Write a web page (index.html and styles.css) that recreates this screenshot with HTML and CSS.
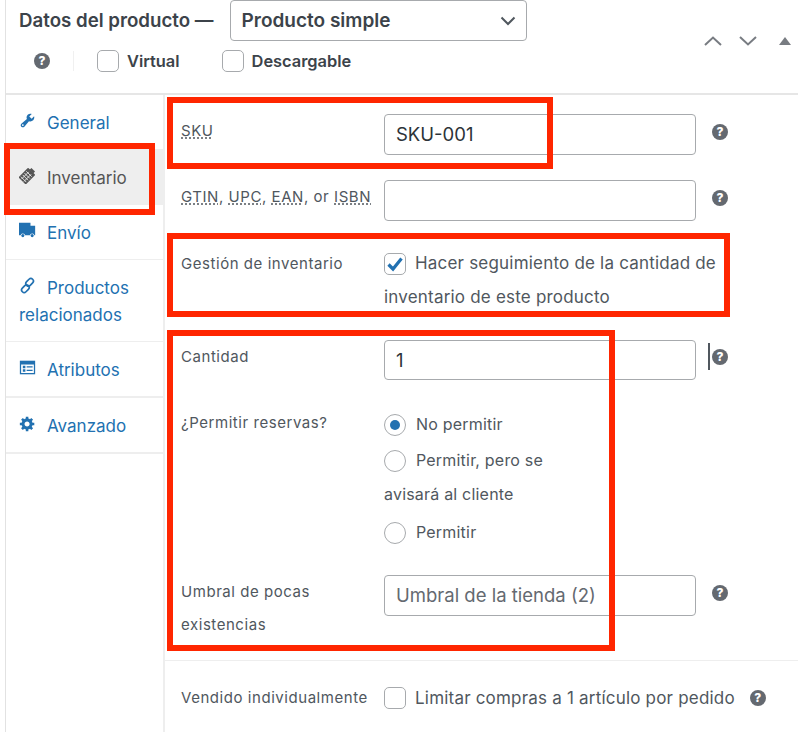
FILE: index.html
```html
<!DOCTYPE html>
<html lang="es">
<head>
    <meta charset="UTF-8">
    <meta name="viewport" content="width=device-width, initial-scale=1.0">
    <title>Datos del producto</title>
    <link rel="stylesheet" href="styles.css">
</head>
<body>
    <div class="postbox">
        <div class="postbox-header">
            <div class="header-main">
                <div class="title-line">
                    <h2>Datos del producto —</h2>
                    <div class="select-box">
                        <span>Producto simple</span>
                        <svg class="select-arrow" viewBox="0 0 16 10"><path d="M1.5 1.5 8 8l6.5-6.5"/></svg>
                    </div>
                </div>
                <div class="type-line">
                    <span class="help">?</span>
                    <span class="type-sep"></span>
                    <label class="type-option"><span class="check"></span>Virtual</label>
                    <label class="type-option"><span class="check"></span>Descargable</label>
                </div>
            </div>
            <div class="handle-actions">
                <svg class="handle" viewBox="0 0 18 10"><path d="M1 9l8-7.5L17 9"/></svg>
                <svg class="handle" viewBox="0 0 18 10"><path d="M1 1l8 7.5L17 1"/></svg>
                <svg class="handle-toggle" viewBox="0 0 12 8"><path d="M6 0l6 8H0z"/></svg>
            </div>
        </div>

        <div class="panel-wrap">
            <ul class="tabs">
                <li class="tab">
                    <a href="#">
                        <svg class="tab-icon" viewBox="0 0 20 20"><path d="M16.68 9.77c-1.34 1.34-3.3 1.67-4.95.99l-5.41 6.52c-.99.99-2.59.99-3.58 0s-.99-2.59 0-3.57l6.52-5.42c-.68-1.65-.35-3.61.99-4.95 1.28-1.28 3.12-1.62 4.72-1.06l-2.89 2.89 2.82 2.82 2.86-2.87c.53 1.58.18 3.39-1.08 4.67zM3.81 16.21c.4.39 1.04.39 1.43 0 .4-.4.4-1.04 0-1.43-.39-.4-1.03-.4-1.43 0-.39.39-.39 1.03 0 1.43z"/></svg>General
                    </a>
                </li>
                <li class="tab active">
                    <a href="#">
                        <svg class="tab-icon" viewBox="0 0 20 20"><g transform="rotate(45 10 10)"><rect x="4" y="3" width="12" height="16" rx="1"/><rect x="7" y="0.500" width="6" height="3"/><path class="hatch" d="M5.500 7.500h9M5.500 10.500h9M5.500 13.500h9M5.500 16.500h9M8 6v12M12 6v12"/></g></svg>Inventario
                    </a>
                </li>
                <li class="tab">
                    <a href="#">
                        <svg class="tab-icon" viewBox="0 0 20 20"><path d="M0 1h13.500v3.500H19v11H0z"/><circle class="hole" cx="4.500" cy="16" r="2.600"/><circle class="hole" cx="15.500" cy="16" r="2.600"/><circle cx="4.500" cy="16" r="1.800"/><circle cx="15.500" cy="16" r="1.800"/></svg>Envío
                    </a>
                </li>
                <li class="tab tall">
                    <a href="#">
                        <svg class="tab-icon line-icon" viewBox="0 0 20 20"><rect x="9.500" y="1.200" width="6" height="10" rx="3" transform="rotate(45 12.500 6.200)"/><rect x="4.500" y="8.800" width="6" height="10" rx="3" transform="rotate(45 7.500 13.800)"/></svg>Productos relacionados
                    </a>
                </li>
                <li class="tab thick">
                    <a href="#">
                        <svg class="tab-icon" viewBox="0 0 20 20"><path d="M1 2h18v16H1z"/><path class="hole" d="M2.500 6.500h15V16.500h-15z"/><path d="M4.500 8h3v3h-3zM4.500 12h3v3h-3zM9 8.500h7v1.500H9zM9 12.500h7V14H9z"/></svg>Atributos
                    </a>
                </li>
                <li class="tab thick">
                    <a href="#">
                        <svg class="tab-icon" viewBox="0 0 20 20"><path d="M18 12h-2.18c-.17.7-.44 1.35-.81 1.93l1.54 1.54-2.1 2.1-1.54-1.54c-.58.36-1.23.63-1.91.79V19H8v-2.18c-.68-.16-1.33-.43-1.91-.79l-1.54 1.54-2.12-2.12 1.54-1.54c-.36-.58-.63-1.23-.79-1.91H1V9.030h2.170c.16-.7.44-1.350.8-1.940L2.430 5.550l2.100-2.100 1.540 1.540c.58-.37 1.240-.64 1.930-.81V2h3v2.180c.68.16 1.330.43 1.910.79l1.540-1.540 2.120 2.120-1.540 1.540c.36.59.64 1.240.8 1.940H18V12zm-8.500 1.500c1.660 0 3-1.340 3-3s-1.340-3-3-3-3 1.340-3 3 1.340 3 3 3z"/></svg>Avanzado
                    </a>
                </li>
            </ul>

            <div class="panel">
                <div class="options-group">
                    <div class="form-field sku-row">
                        <label class="field-label"><abbr>SKU</abbr></label>
                        <div class="text-input">SKU-001</div>
                        <span class="help">?</span>
                    </div>
                    <div class="form-field gtin-row">
                        <label class="field-label"><abbr>GTIN</abbr>, <abbr>UPC</abbr>, <abbr>EAN</abbr>, or <abbr>ISBN</abbr></label>
                        <div class="text-input"></div>
                        <span class="help">?</span>
                    </div>
                    <div class="form-field manage-row">
                        <label class="field-label">Gestión de inventario</label>
                        <div class="field-text">
                            <span class="check checked">
                                <svg viewBox="0 0 20 20"><path d="M3.500 10.500 8 15l8.500-10.500"/></svg>
                            </span>Hacer seguimiento de la cantidad de inventario de este producto
                        </div>
                    </div>
                    <div class="form-field qty-row">
                        <label class="field-label">Cantidad</label>
                        <div class="text-input">1</div>
                        <span class="cursor"></span>
                        <span class="help">?</span>
                    </div>
                    <div class="form-field backorder-row">
                        <label class="field-label">¿Permitir reservas?</label>
                        <ul class="radio-list">
                            <li><span class="radio selected"></span>No permitir</li>
                            <li><span class="radio"></span>Permitir, pero se avisará al cliente</li>
                            <li><span class="radio"></span>Permitir</li>
                        </ul>
                    </div>
                    <div class="form-field threshold-row">
                        <label class="field-label">Umbral de pocas existencias</label>
                        <div class="text-input placeholder">Umbral de la tienda (2)</div>
                        <span class="help">?</span>
                    </div>
                </div>
                <div class="sold-group">
                    <div class="form-field sold-row">
                        <label class="field-label">Vendido individualmente</label>
                        <span class="check"></span>
                        <span class="sold-text">Limitar compras a 1 artículo por pedido</span>
                        <span class="help">?</span>
                    </div>
                </div>
            </div>
        </div>
    </div>

    <div class="mark mark-tab"></div>
    <div class="mark mark-sku"></div>
    <div class="mark mark-manage"></div>
    <div class="mark mark-stock"></div>
</body>
</html>
```

FILE: styles.css
```css
* {
    box-sizing: border-box;
}
body {
    margin: 0;
    height: 732px;
    overflow: hidden;
    position: relative;
    background: #fff;
    font-family: Inter, "Liberation Sans", sans-serif;
    color: #50575e;
}
ul {
    list-style: none;
    margin: 0;
    padding: 0;
}
.postbox {
    margin-left: 5px;
    border-left: 1px solid #e2e2e2;
    height: 732px;
}

/* header */
.postbox-header {
    display: flex;
    justify-content: space-between;
    height: 95px;
    border-bottom: 2px solid #e6e6e6;
    padding-left: 13px;
}
.title-line {
    display: flex;
    align-items: flex-start;
}
.title-line h2 {
    margin: 9px 16px 0 0;
    font-size: 18.7px;
    line-height: 24px;
    font-weight: 600;
    color: #3c434a;
    white-space: nowrap;
}
.select-box {
    width: 297px;
    height: 41px;
    border: 1px solid #a7aaad;
    border-radius: 4px;
    display: flex;
    justify-content: space-between;
    align-items: center;
    padding: 0 10px 0 11px;
    font-size: 19px;
    font-weight: 600;
    color: #3c434a;
}
.select-arrow {
    width: 16px;
    height: 10px;
    fill: none;
    stroke: #50575e;
    stroke-width: 2;
}
.type-line {
    display: flex;
    align-items: center;
    margin-top: 8px;
    height: 24px;
    padding-left: 15px;
}
.type-sep {
    width: 1px;
    height: 20px;
    background: #f0f0f0;
    margin-left: 23px;
}
.type-option {
    display: flex;
    align-items: center;
    gap: 8px;
    margin-left: 23px;
    font-size: 16.4px;
    font-weight: 600;
    color: #3c434a;
}
.type-option + .type-option {
    margin-left: 42px;
}
.handle-actions {
    display: flex;
    align-items: center;
    height: 10px;
    margin-top: 36px;
    padding-right: 7px;
}
.handle {
    width: 18px;
    height: 10px;
    margin-right: 17px;
    fill: none;
    stroke: #787c82;
    stroke-width: 2;
}
.handle-toggle {
    width: 12px;
    height: 8px;
    fill: #787c82;
    margin-left: 5px;
}

/* tabs */
.panel-wrap {
    display: flex;
}
.tabs {
    width: 159px;
    height: 637px;
    flex-shrink: 0;
    border-right: 2px solid #eee;
}
.tab {
    height: 55px;
    border-bottom: 1px solid #eee;
    font-size: 17px;
    line-height: 27px;
}
.tab.tall {
    height: 82px;
}
.tab.thick {
    height: 56px;
    border-bottom-width: 2px;
}
.tab a {
    display: block;
    padding: 15px 8px 0 13px;
    color: #2271b1;
    text-decoration: none;
}
.tab.active {
    background: #eee;
}
.tab.active a {
    color: #555;
}
.tab-icon {
    width: 17px;
    height: 17px;
    margin-right: 11px;
    fill: currentColor;
    vertical-align: 0;
}
.tab-icon .hatch {
    fill: none;
    stroke: #eee;
    stroke-width: 1;
}
.tab-icon .hole {
    fill: #fff;
}
.line-icon {
    fill: none;
    stroke: currentColor;
    stroke-width: 2;
}

/* fields */
.panel {
    flex: 1;
}
.options-group {
    border-bottom: 1px solid #eee;
    padding-left: 16px;
}
.sold-group {
    padding-left: 16px;
}
.form-field {
    display: flex;
    align-items: flex-start;
}
.field-label {
    width: 203px;
    flex-shrink: 0;
    font-size: 15px;
    line-height: 33px;
    letter-spacing: .55px;
}
.field-label abbr {
    text-decoration: underline dotted #50575e;
    text-underline-offset: 2px;
}
.text-input {
    width: 312px;
    height: 41px;
    flex-shrink: 0;
    border: 1px solid #a7aaad;
    border-radius: 4px;
    padding: 0 11px;
    font-size: 18.5px;
    line-height: 39px;
    color: #2c3338;
}
.text-input.placeholder {
    color: #646970;
}
.help {
    width: 16px;
    height: 16px;
    flex-shrink: 0;
    margin: 10px 0 0 16px;
    border-radius: 50%;
    background: #646970;
    color: #fff;
    font-size: 12px;
    font-weight: 800;
    line-height: 16px;
    text-align: center;
}
.type-line .help {
    margin: 0;
}
.check {
    display: inline-block;
    width: 22px;
    height: 22px;
    flex-shrink: 0;
    border: 1px solid #a7aaad;
    border-radius: 5px;
    background: #fff;
}
.check svg {
    display: block;
    fill: none;
    stroke: #2271b1;
    stroke-width: 3.2;
}
.sku-row {
    padding-top: 19px;
}
.gtin-row {
    margin-top: 25px;
}
.manage-row {
    margin-top: 25px;
}
.manage-row .field-label {
    line-height: 34px;
    padding-top: 1px;
}
.field-text {
    width: 340px;
    font-size: 17px;
    line-height: 34px;
    letter-spacing: .2px;
}
.field-text .check {
    vertical-align: -6px;
    margin-right: 9px;
}
.qty-row {
    margin-top: 26px;
}
.qty-row .help {
    margin: 9px 0 0 0;
}
.qty-row .text-input {
    height: 40px;
}
.cursor {
    width: 2px;
    height: 27px;
    margin: 3px 2px 0 12px;
    background: #50575e;
}
.backorder-row {
    margin-top: 27px;
}
.backorder-row .field-label {
    margin-top: -1px;
}
.radio-list {
    width: 200px;
    font-size: 16px;
    line-height: 34px;
    letter-spacing: .2px;
}
.radio-list li {
    margin-bottom: 2px;
}
.radio-list li + li {
    margin-bottom: 4px;
}
.radio {
    display: inline-block;
    width: 22px;
    height: 22px;
    margin-right: 10px;
    border: 1px solid #a7aaad;
    border-radius: 50%;
    vertical-align: -6px;
    position: relative;
}
.radio.selected::after {
    content: "";
    position: absolute;
    left: 5px;
    top: 5px;
    width: 10px;
    height: 10px;
    border-radius: 50%;
    background: #2271b1;
}
.threshold-row {
    margin-top: 22px;
    padding-bottom: 19px;
}
.sold-row {
    align-items: center;
    height: 73px;
}
.sold-text {
    margin-left: 9px;
    font-size: 17px;
    letter-spacing: .2px;
    white-space: nowrap;
}
.sold-row .help {
    margin: 0 0 0 15px;
}
.sold-row .field-label {
    line-height: 20px;
}

/* red marks laid over the screenshot */
.mark {
    position: absolute;
    border: 6px solid #ff2600;
    pointer-events: none;
}
.mark-tab {
    left: 4px;
    top: 143px;
    width: 151px;
    height: 72px;
}
.mark-sku {
    left: 167px;
    top: 97px;
    width: 386px;
    height: 72px;
}
.mark-manage {
    left: 167px;
    top: 233px;
    width: 563px;
    height: 84px;
}
.mark-stock {
    left: 167px;
    top: 330px;
    width: 448px;
    height: 321px;
}
```
